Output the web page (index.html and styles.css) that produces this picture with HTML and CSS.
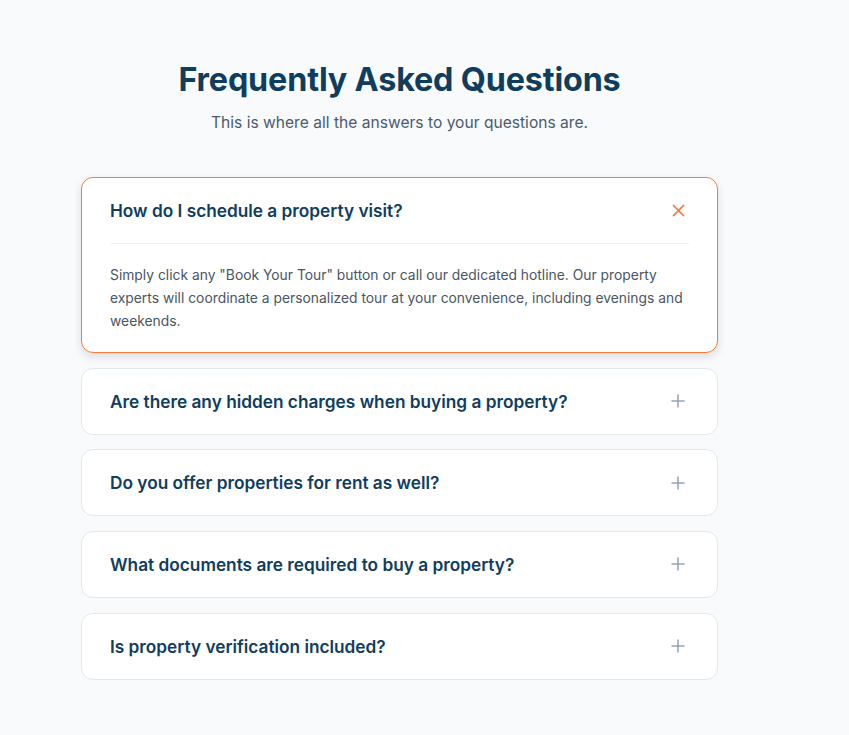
FILE: index.html
```html
<!DOCTYPE html>
<html lang="en">
<head>
<meta charset="utf-8">
<title>FAQ</title>
<link rel="stylesheet" href="styles.css">
</head>
<body>
<section class="faq">
  <header class="faq-head">
    <h1 class="faq-title">Frequently Asked Questions</h1>
    <p class="faq-sub">This is where all the answers to your questions are.</p>
  </header>
  <div class="faq-list">
    <div class="item open">
      <div class="q">
        <span class="q-text">How do I schedule a property visit?</span>
        <svg class="icon x" viewBox="0 0 14 14" width="14" height="14"><path d="M1.5 1.5 L12.5 12.5 M12.5 1.5 L1.5 12.5" fill="none" stroke="currentColor" stroke-width="1.6" stroke-linecap="round"/></svg>
      </div>
      <div class="a">
        <p>Simply click any "Book Your Tour" button or call our dedicated hotline. Our property experts will coordinate a personalized tour at your convenience, including evenings and weekends.</p>
      </div>
    </div>
    <div class="item">
      <div class="q">
        <span class="q-text">Are there any hidden charges when buying a property?</span>
        <svg class="icon plus" viewBox="0 0 14 14" width="14" height="14"><path d="M7 1 V13 M1 7 H13" fill="none" stroke="currentColor" stroke-width="1.5" stroke-linecap="round"/></svg>
      </div>
    </div>
    <div class="item">
      <div class="q">
        <span class="q-text">Do you offer properties for rent as well?</span>
        <svg class="icon plus" viewBox="0 0 14 14" width="14" height="14"><path d="M7 1 V13 M1 7 H13" fill="none" stroke="currentColor" stroke-width="1.5" stroke-linecap="round"/></svg>
      </div>
    </div>
    <div class="item">
      <div class="q">
        <span class="q-text">What documents are required to buy a property?</span>
        <svg class="icon plus" viewBox="0 0 14 14" width="14" height="14"><path d="M7 1 V13 M1 7 H13" fill="none" stroke="currentColor" stroke-width="1.5" stroke-linecap="round"/></svg>
      </div>
    </div>
    <div class="item">
      <div class="q">
        <span class="q-text">Is property verification included?</span>
        <svg class="icon plus" viewBox="0 0 14 14" width="14" height="14"><path d="M7 1 V13 M1 7 H13" fill="none" stroke="currentColor" stroke-width="1.5" stroke-linecap="round"/></svg>
      </div>
    </div>
  </div>
</section>
</body>
</html>
```

FILE: styles.css
```css
* { box-sizing: border-box; }
html, body { margin: 0; padding: 0; }
body {
  background: #f8fafc;
  font-family: "Inter", "Liberation Sans", sans-serif;
  color: #0f3d5e;
}
.faq {
  width: 637px;
  margin-left: 81px;
  padding-top: 57px;
}
.faq-head {
  text-align: center;
}
.faq-title {
  margin: 0;
  font-family: "Inter", sans-serif;
  font-weight: 700;
  font-size: 32.3px;
  line-height: 46px;
  letter-spacing: -0.15px;
  color: #0f3d5e;
}
.faq-sub {
  margin: 8px 0 0;
  font-size: 15.6px;
  line-height: 24px;
  color: #4b5b70;
}
.faq-list {
  margin-top: 42px;
  display: flex;
  flex-direction: column;
  gap: 14.67px;
}
.item {
  background: #ffffff;
  border: 1px solid #e2e8f0;
  border-radius: 12px;
}
.item.open {
  border-color: #f97a3a;
  box-shadow: 0 4px 10px rgba(15, 23, 42, 0.12);
}
.q {
  display: flex;
  align-items: center;
  justify-content: space-between;
  padding: 20px 32px 20px 28px;
}
.q-text {
  font-size: 17.25px;
  line-height: 25px;
  font-weight: 600;
  color: #0f3d5e;
}
.icon { flex: none; }
.icon.x { color: #f7773a; width: 13px; height: 13px; }
.icon.plus { color: #94a3b8; }
.a {
  margin: 0 28px;
  border-top: 1px solid #eef2f6;
  padding: 20px 0 19px;
}
.a p {
  margin: 0;
  font-size: 13.85px;
  line-height: 23px;
  color: #4b5563;
}
```
